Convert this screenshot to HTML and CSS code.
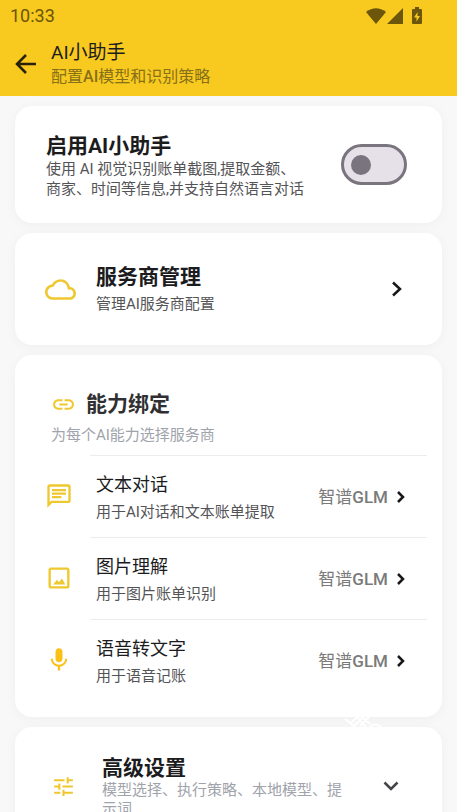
FILE: index.html
```html
<!DOCTYPE html>
<html lang="zh-CN">
<head>
<meta charset="utf-8">
<meta name="viewport" content="width=device-width, initial-scale=1">
<title>AI小助手</title>
<link rel="stylesheet" href="styles.css">
</head>
<body>
<div class="app">
  <header class="top">
    <div class="status">
      <span>10:33</span>
      <div class="status-icons">
        <svg width="20" height="16" viewBox="0 0 20 16"><path d="M0 4Q10-3.500 20 4L10 16Z"/></svg>
        <svg width="16" height="16" viewBox="0 0 16 16"><path d="M16 0V16H0Z"/></svg>
        <svg class="battery" width="10" height="17" viewBox="0 0 10 17"><path fill-rule="evenodd" d="M3 0H7V2H9Q10 2 10 3V16Q10 17 9 17H1Q0 17 0 16V3Q0 2 1 2H3ZM5.500 5L2 10.500H4.500V14.500L8 9H5.500Z"/></svg>
      </div>
    </div>
    <div class="appbar">
      <button class="back" type="button" aria-label="返回">
        <svg width="22" height="22" viewBox="0 0 22 22"><path d="M21 11H2.500M11 2L2 11L11 20"/></svg>
      </button>
      <div class="heading">
        <h1>AI小助手</h1>
        <p>配置<b>AI</b>模型和识别策略</p>
      </div>
    </div>
  </header>
  <main>
    <section class="card enable">
      <label class="grow" for="enable">
        <span class="title">启用AI小助手</span>
        <span class="desc">使用 AI 视觉识别账单截图,提取金额、<br>商家、时间等信息,并支持自然语言对话</span>
      </label>
      <input class="switch" id="enable" type="checkbox" role="switch">
    </section>

    <a class="card provider" href="#providers">
      <svg class="icon" width="31" height="31" viewBox="0 0 24 24"><path d="M19.350 10.040C18.670 6.590 15.640 4 12 4 9.110 4 6.600 5.640 5.350 8.040 2.340 8.360 0 10.910 0 14c0 3.310 2.690 6 6 6h13c2.760 0 5-2.240 5-5 0-2.640-2.050-4.780-4.650-4.960zM19 18H6c-2.210 0-4-1.790-4-4 0-2.050 1.530-3.760 3.560-3.970l1.070-.11.5-.95C8.080 7.140 9.940 6 12 6c2.620 0 4.880 1.860 5.390 4.430l.3 1.500 1.530.11c1.560.1 2.780 1.410 2.780 2.960 0 1.650-1.350 3-3 3z"/></svg>
      <span class="grow">
        <span class="title">服务商管理</span>
        <span class="desc">管理AI服务商配置</span>
      </span>
      <svg class="chevron" width="12" height="16" viewBox="0 0 12 16"><path d="M2 1.500L9 8L2 14.500"/></svg>
    </a>

    <section class="card binding">
      <div class="binding-head">
        <h2><svg class="icon" width="25" height="25" viewBox="0 0 24 24"><path d="M3.900 12c0-1.710 1.390-3.100 3.100-3.100h4V7H7c-2.760 0-5 2.240-5 5s2.240 5 5 5h4v-1.900H7c-1.710 0-3.100-1.390-3.100-3.100zM8 13h8v-2H8v2zm9-6h-4v1.900h4c1.710 0 3.100 1.390 3.100 3.100s-1.390 3.100-3.100 3.100h-4V17h4c2.760 0 5-2.240 5-5s-2.240-5-5-5z"/></svg>能力绑定</h2>
        <p>为每个AI能力选择服务商</p>
      </div>
      <a class="row" href="#text">
        <svg class="icon" width="28" height="28" viewBox="0 0 24 24"><path d="M4 4h16v12H5.170L4 17.170V4m0-2c-1.100 0-1.990.9-1.990 2L2 22l4-4h14c1.100 0 2-.9 2-2V4c0-1.100-.9-2-2-2H4zm2 10h8v2H6v-2zm0-3h12v2H6V9zm0-3h12v2H6V6z"/></svg>
        <span class="row-body">
          <span class="grow"><span class="name">文本对话</span><span class="desc">用于AI对话和文本账单提取</span></span>
          <span class="value">智谱<b>GLM</b></span>
          <svg class="chevron" width="10" height="14" viewBox="0 0 10 14"><path d="M2 2L7 7L2 12"/></svg>
        </span>
      </a>
      <a class="row" href="#image">
        <svg class="icon" width="28" height="28" viewBox="0 0 24 24"><path d="M19 5v14H5V5h14m0-2H5c-1.100 0-2 .9-2 2v14c0 1.100.9 2 2 2h14c1.100 0 2-.9 2-2V5c0-1.100-.9-2-2-2zm-4.500 9.500l-2.500 3.200-1.700-2.100L7 17.500h10.500z"/></svg>
        <span class="row-body">
          <span class="grow"><span class="name">图片理解</span><span class="desc">用于图片账单识别</span></span>
          <span class="value">智谱<b>GLM</b></span>
          <svg class="chevron" width="10" height="14" viewBox="0 0 10 14"><path d="M2 2L7 7L2 12"/></svg>
        </span>
      </a>
      <a class="row" href="#voice">
        <svg class="icon mic" width="28" height="28" viewBox="0 0 24 24"><path d="M12 14c1.660 0 2.990-1.340 2.990-3L15 5c0-1.660-1.340-3-3-3S9 3.340 9 5v6c0 1.660 1.340 3 3 3zm5.300-3c0 3-2.540 5.100-5.300 5.100S6.700 14 6.700 11H5c0 3.410 2.720 6.230 6 6.720V21h2v-3.280c3.280-.48 6-3.300 6-6.720h-1.700z"/></svg>
        <span class="row-body">
          <span class="grow"><span class="name">语音转文字</span><span class="desc">用于语音记账</span></span>
          <span class="value">智谱<b>GLM</b></span>
          <svg class="chevron" width="10" height="14" viewBox="0 0 10 14"><path d="M2 2L7 7L2 12"/></svg>
        </span>
      </a>
      <svg class="sparkle" width="38" height="12" viewBox="0 0 38 12"><path d="M1 3L11 11M7 7L13 1M12 0L22 11M10 10L20 0M16 10L25 1M18 1L26 8M26 11Q31 6 37 11"/></svg>
    </section>

    <button class="card advanced" type="button" aria-expanded="false">
      <svg class="icon" width="25" height="25" viewBox="0 0 24 24"><path d="M3 17v2h6v-2H3zM3 5v2h10V5H3zm10 16v-2h8v-2h-8v-2h-2v6h2zM7 9v2H3v2h4v2h2V9H7zm14 4v-2H11v2h10zm-6-4h2V7h4V5h-4V3h-2v6z"/></svg>
      <span class="grow">
        <span class="title">高级设置</span>
        <span class="desc">模型选择、执行策略、本地模型、提<br>示词</span>
      </span>
      <svg class="chevron" width="16" height="11" viewBox="0 0 16 11"><path d="M1.500 1.500L8 8L14.500 1.500"/></svg>
    </button>
  </main>
</div>
</body>
</html>
```
FILE: styles.css
```css
* { box-sizing: border-box; }

body {
  margin: 0;
  background: #f8f8f8;
  color: #1c1c1e;
  font-family: Roboto, "Noto Sans CJK SC", sans-serif;
  font-size: 15px;
}

h1, h2, p { margin: 0; font-weight: 400; }
a { color: inherit; text-decoration: none; }
svg { display: block; flex: none; }

.app {
  display: flex;
  flex-direction: column;
  height: 100vh;
}

.top {
  flex: none;
  background: #f8c91e;
}

.status {
  display: flex;
  justify-content: space-between;
  align-items: center;
  height: 31px;
  padding: 0 35px 0 10px;
  color: #6b560b;
  font-size: 18px;
}

.status-icons {
  display: flex;
  align-items: center;
  gap: 1px;
  fill: #6b560b;
}

.battery { margin-left: 8px; }

.appbar {
  display: flex;
  align-items: center;
  gap: 14px;
  height: 65px;
  padding-left: 15px;
}

.back {
  padding: 0;
  border: 0;
  background: none;
}

.back path {
  fill: none;
  stroke: #2a2208;
  stroke-width: 2.500;
}

.heading h1 {
  font-size: 19px;
  line-height: 26px;
}

.heading p {
  color: #86701a;
  font-size: 16px;
  line-height: 22px;
}

.heading b { font-weight: 500; }

main {
  display: flex;
  flex: 1;
  flex-direction: column;
  gap: 10px;
  min-height: 0;
  padding: 10px 15px;
  overflow-y: auto;
  scrollbar-width: none;
}

.card {
  display: flex;
  flex: none;
  align-items: center;
  border: 0;
  border-radius: 17px;
  background: #fff;
  box-shadow: 0 2px 12px rgba(0, 0, 0, 0.04);
  font-family: inherit;
  font-size: 15px;
  text-align: left;
}

.grow { flex: 1; min-width: 0; }

.title, .desc, .name { display: block; }

.title {
  color: #1c1c1e;
  font-size: 21px;
  font-weight: 700;
  line-height: 25px;
}

.desc {
  color: #545457;
  line-height: 19px;
}

.icon { fill: #efc82f; }

.chevron path {
  fill: none;
  stroke: #18181c;
  stroke-width: 2.500;
}

.enable {
  align-items: flex-start;
  gap: 24px;
  padding: 28px 35px 24px 31px;
}

.enable .desc { line-height: 20px; }

.switch {
  display: flex;
  flex: none;
  align-items: center;
  width: 66px;
  height: 41px;
  margin: 10px 0 0;
  padding-left: 7px;
  border: 3px solid #79747e;
  border-radius: 21px;
  background: #e6e0e9;
  appearance: none;
}

.switch::before {
  width: 20px;
  height: 20px;
  border-radius: 50%;
  background: #79747e;
  content: "";
}

.provider {
  gap: 20px;
  padding: 29px 39px 29px 30px;
}

.provider .title { line-height: 30px; }
.provider .desc { line-height: 24px; }

.binding {
  position: relative;
  display: block;
  padding-bottom: 16px;
}

.binding-head { padding: 34px 36px 7px; }

.binding-head h2 {
  display: flex;
  align-items: center;
  gap: 10px;
  color: #303033;
  font-size: 21px;
  font-weight: 700;
  line-height: 30px;
}

.binding-head p {
  padding-top: 3px;
  color: #a0a3ab;
  line-height: 26px;
}

.row {
  display: flex;
  align-items: center;
  gap: 17px;
  padding: 0 15px 0 30px;
}

.row-body {
  display: flex;
  flex: 1;
  align-items: center;
  padding: 14px 21px 13px 6px;
  border-top: 1px solid #ececee;
}

.name {
  color: #1c1c1e;
  font-size: 18px;
  line-height: 30px;
}

.row .desc { line-height: 24px; }

.value {
  padding: 0 8px 4px 0;
  color: #7a7a7a;
  font-size: 17px;
}

.value b { font-weight: 500; }

.mic { fill: #fbc016; }

.sparkle {
  position: absolute;
  right: 60px;
  bottom: -11px;
  fill: none;
  stroke: #fff;
  stroke-width: 2;
}

.advanced {
  align-items: flex-start;
  gap: 26px;
  width: 100%;
  padding: 29px 43px 28px 36px;
}

.advanced .icon { margin-top: 18px; }
.advanced .desc { color: #a0a3ab; }
.advanced .chevron { margin-top: 25px; }
.advanced .chevron path { stroke: #444448; }
```
